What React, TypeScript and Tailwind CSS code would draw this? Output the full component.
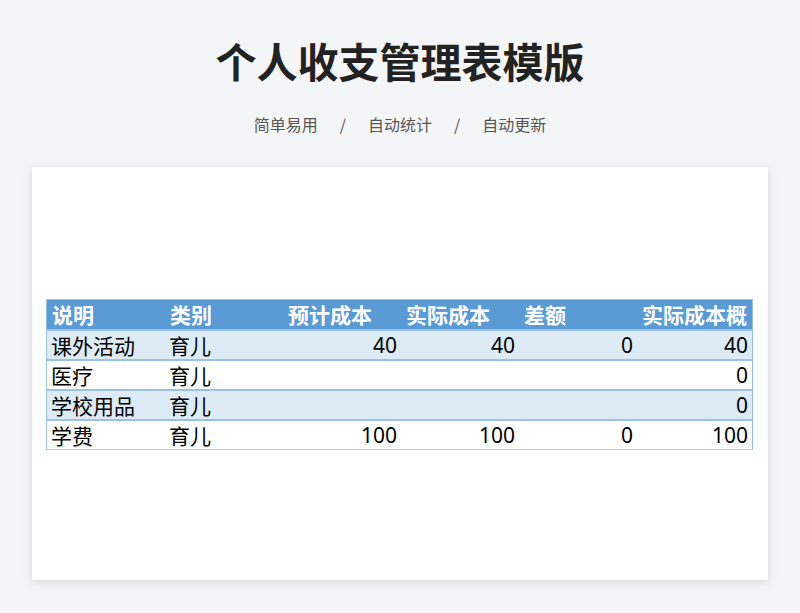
import React from "react";

const rows = [
  ["课外活动", "育儿", "40", "40", "0", "40"],
  ["医疗", "育儿", "", "", "", "0"],
  ["学校用品", "育儿", "", "", "", "0"],
  ["学费", "育儿", "100", "100", "0", "100"],
];
const heads = ["说明", "类别", "预计成本", "实际成本", "差额", "实际成本概"];

export default function App() {
  return (
    <div className="w-[800px] h-[613px] bg-[#f4f5f7] flex flex-col items-center overflow-hidden" style={{ fontFamily: '"Noto Sans CJK SC", "Noto Sans", sans-serif' }}>
      <h1 className="mt-[32px] h-[56px] text-[41px] leading-[56px] font-bold text-[#222]">个人收支管理表模版</h1>
      <div className="mt-[24px] flex gap-[22px] text-[16px] leading-[24px] text-[#555]">
        <span>简单易用</span><span>/</span><span>自动统计</span><span>/</span><span>自动更新</span>
      </div>
      <div className="mt-[31px] w-[736px] h-[413px] bg-white shadow-[0_2px_10px_rgba(0,0,0,0.12)] pt-[132px] pl-[14px]">
        <div className="w-[707px] border border-[#9bc2e6] overflow-hidden text-[21px] leading-[28px]">
          <div className="grid grid-cols-[118px_118px_118px_118px_118px_115px] bg-[#5b9bd5] text-white font-bold h-[29px]">
            {heads.map((h, i) => (
              <div key={i} className="pl-[5px] whitespace-nowrap">{h}</div>
            ))}
          </div>
          {rows.map((r, ri) => (
            <div key={ri} className={`grid grid-cols-[118px_118px_118px_118px_118px_115px] h-[30px] border-t-2 border-[#9bc2e6] text-black ${ri % 2 === 0 ? "bg-[#ddebf7]" : "bg-white"}`}>
              {r.map((c, ci) => (
                <div key={ci} className={ci < 2 ? "pl-[4px] whitespace-nowrap" : "text-right pr-[4px]"} style={{ fontFamily: ci < 2 ? undefined : '"Noto Sans", sans-serif' }}>{c}</div>
              ))}
            </div>
          ))}
        </div>
      </div>
    </div>
  );
}
